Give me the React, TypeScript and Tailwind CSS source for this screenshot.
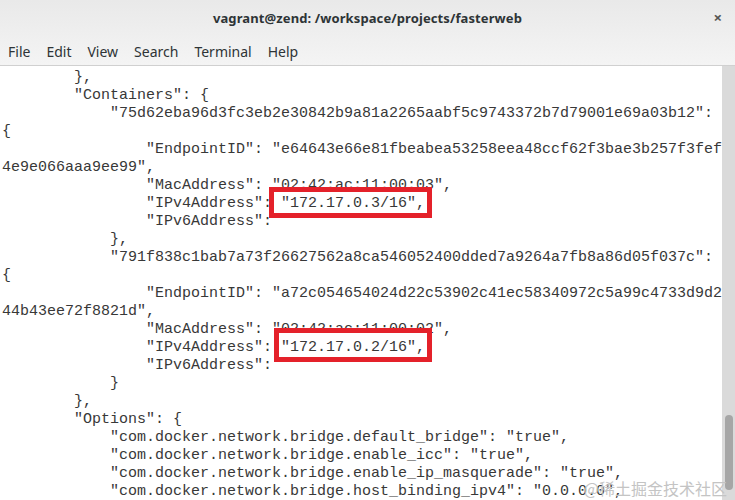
import React from "react";

const lines = [
  "        },",
  '        "Containers": {',
  '            "75d62eba96d3fc3eb2e30842b9a81a2265aabf5c9743372b7d79001e69a03b12":',
  "{",
  '                "EndpointID": "e64643e66e81fbeabea53258eea48ccf62f3bae3b257f3fef',
  '4e9e066aaa9ee99",',
  '                "MacAddress": "02:42:ac:11:00:03",',
  '                "IPv4Address": "172.17.0.3/16",',
  '                "IPv6Address":',
  "            },",
  '            "791f838c1bab7a73f26627562a8ca546052400dded7a9264a7fb8a86d05f037c":',
  "{",
  '                "EndpointID": "a72c054654024d22c53902c41ec58340972c5a99c4733d9d2',
  '44b43ee72f8821d",',
  '                "MacAddress": "02:42:ac:11:00:02",',
  '                "IPv4Address": "172.17.0.2/16",',
  '                "IPv6Address":',
  "            }",
  "        },",
  '        "Options": {',
  '            "com.docker.network.bridge.default_bridge": "true",',
  '            "com.docker.network.bridge.enable_icc": "true",',
  '            "com.docker.network.bridge.enable_ip_masquerade": "true",',
  '            "com.docker.network.bridge.host_binding_ipv4": "0.0.0.0",',
];

const menu = ["File", "Edit", "View", "Search", "Terminal", "Help"];

export default function App() {
  return (
    <div className="relative w-[735px] h-[500px] overflow-hidden bg-white flex flex-col">
      {/* Header: title + menu share one gradient */}
      <div className="bg-gradient-to-b from-[#e9e9e9] to-[#f4f4f4] border-b border-[#d0d0d0] font-['Noto_Sans',sans-serif] text-[#2e3436]">
        <div className="relative h-[37px] flex items-center justify-center">
          <span className="text-[13px] font-bold tracking-[0.1px]">vagrant@zend: /workspace/projects/fasterweb</span>
          <span className="absolute right-[13px] top-[10px] text-[15px] font-bold text-[#555] leading-none">×</span>
        </div>
        <div className="h-[28px] flex items-center pl-[8px] gap-[16px] text-[14px]">
          {menu.map((m) => (
            <span key={m}>{m}</span>
          ))}
        </div>
      </div>

      {/* Terminal body */}
      <div className="flex flex-1 min-h-0">
        <div className="flex-1 pl-[2px] pt-[3px] font-['Liberation_Mono',monospace] text-[15px] leading-[18px] text-[#383838]">
          {lines.map((l, i) => (
            <div key={i} className="whitespace-pre h-[18px]">
              {l}
            </div>
          ))}
        </div>
        {/* Scrollbar */}
        <div className="w-[13px] bg-[#dadada] flex flex-col justify-end pb-[10px] items-center">
          <div className="w-[8px] h-[75px] rounded-full bg-[#a6a6a6] ml-[1px]" />
        </div>
      </div>

      {/* Red highlight boxes */}
      <div className="absolute left-[269px] top-[187px] w-[163px] h-[31px] border-[5px] border-[#e4212a]" />
      <div className="absolute left-[274px] top-[328px] w-[158px] h-[34px] border-[5px] border-[#e4212a]" />

      {/* Watermark */}
      <div className="absolute right-[8px] bottom-[4px] text-[16px] text-[#c4c4c4] font-['Noto_Sans_CJK_SC',sans-serif] leading-none">
        @稀土掘金技术社区
      </div>
    </div>
  );
}
